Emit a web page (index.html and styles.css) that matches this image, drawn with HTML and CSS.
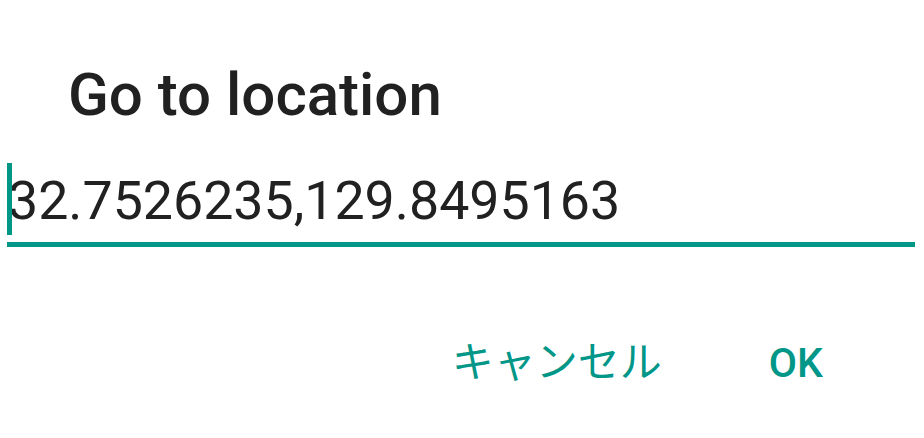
FILE: index.html
```html
<!DOCTYPE html>
<html lang="ja">
<head>
<meta charset="utf-8">
<title>Go to location</title>
<link rel="stylesheet" href="styles.css">
</head>
<body>
<div class="dialog">
  <h1 class="title">Go to location</h1>
  <div class="field">
    <span class="caret"></span>
    <span class="value">32.7526235,129.8495163</span>
  </div>
  <div class="actions">
    <span class="btn btn-cjk">キャンセル</span>
    <span class="btn">OK</span>
  </div>
</div>
</body>
</html>
```
FILE: styles.css
```css
html, body {
  margin: 0;
  padding: 0;
  background: #ffffff;
}
.dialog {
  width: 924px;
  height: 438px;
  font-family: Roboto, "Noto Sans CJK JP", sans-serif;
  color: #212121;
}
.title {
  margin: 0;
  padding: 60px 0 0 68px;
  font-size: 60px;
  line-height: 70px;
  font-weight: 500;
}
.field {
  position: relative;
  margin: 39px 0 0 7px;
  width: 908px;
  padding-bottom: 9px;
  border-bottom: 5px solid #009688;
}
.caret {
  position: absolute;
  left: 0;
  top: -6px;
  width: 5px;
  height: 72px;
  background: #009688;
}
.value {
  display: block;
  font-size: 53.7px;
  line-height: 64px;
  font-weight: 400;
  padding-left: 1px;
}
.actions {
  display: flex;
  justify-content: flex-end;
  align-items: baseline;
  gap: 60px;
  margin-top: 92px;
  padding-right: 77px;
}
.btn {
  padding: 0 24px;
  font-size: 41px;
  line-height: 48px;
  font-weight: 500;
  color: #009688;
}
.btn-cjk {
  font-size: 42px;
  font-weight: 400;
  margin-right: -1px;
}
```
